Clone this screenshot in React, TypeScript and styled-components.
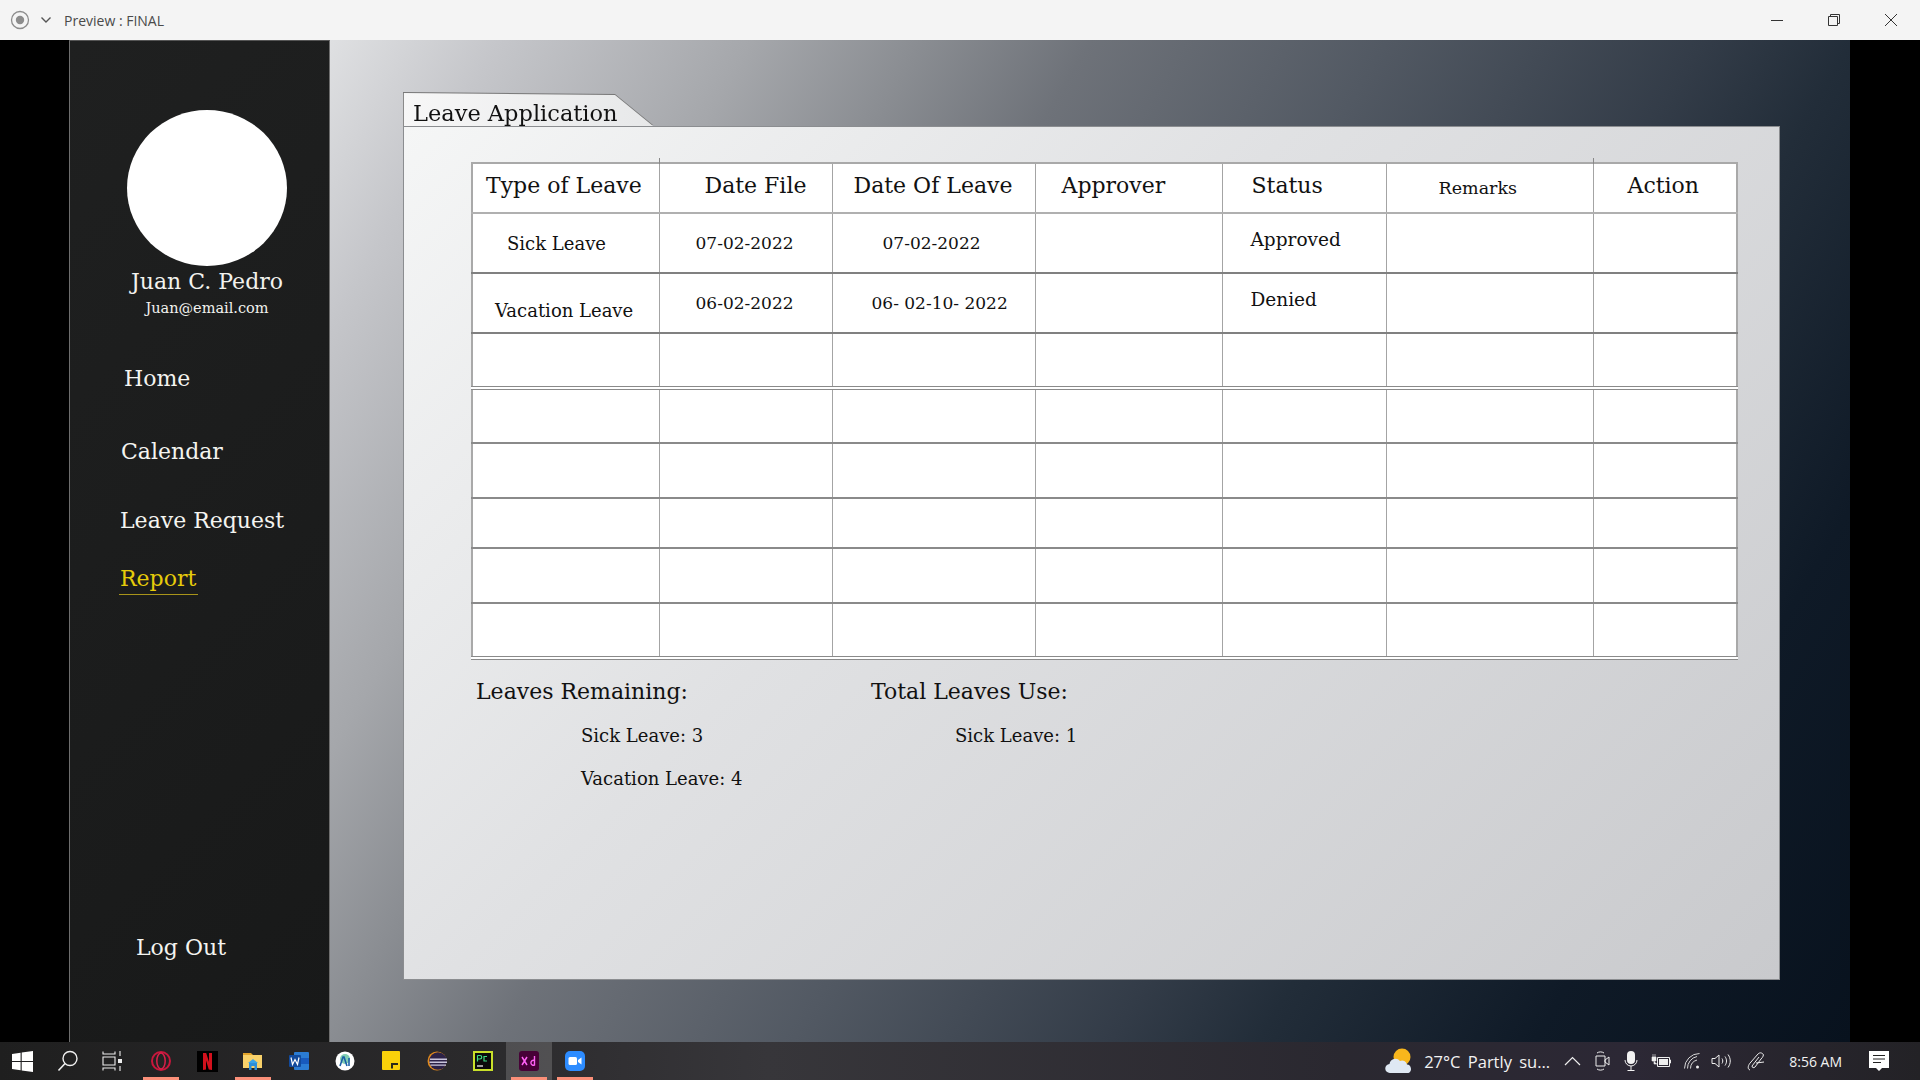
import React from "react";
import styled, { createGlobalStyle } from "styled-components";

const SLAB = `"DejaVu Serif", "Liberation Serif", serif`;
const UI = `"Open Sans", "Noto Sans", "Liberation Sans", sans-serif`;

const Global = createGlobalStyle`
  html, body { margin: 0; padding: 0; background: #000; }
  body { width: 1920px; height: 1080px; overflow: hidden; font-family: ${SLAB}; }
  * { box-sizing: border-box; }
`;

const Screen = styled.div`
  width: 1920px;
  height: 1080px;
  display: flex;
  flex-direction: column;
`;

const TitleBar = styled.header`
  height: 40px;
  flex: none;
  background: #f4f4f4;
  display: flex;
  align-items: center;
  padding-left: 10px;
  color: #444;
  font: 14px ${UI};
`;
const TitleIcon = styled.svg`
  width: 20px;
  height: 20px;
  flex: none;
`;
const Chevron = styled.svg`
  width: 12px;
  height: 8px;
  margin-left: 10px;
  flex: none;
`;
const TitleText = styled.span`
  margin-left: 12px;
  color: #4a4a4a;
`;
const WindowControls = styled.div`
  margin-left: auto;
  display: flex;
  padding-right: 1px;
`;
const WindowButton = styled.button`
  width: 57px;
  height: 40px;
  border: 0;
  padding: 0;
  background: none;
  display: flex;
  align-items: center;
  justify-content: center;
`;

const Main = styled.div`
  flex: 1;
  min-height: 0;
  display: flex;
  background: #000;
  padding: 0 70px 0 69px;
`;

const Sidebar = styled.aside`
  width: 261px;
  flex: none;
  background: linear-gradient(135deg, #1f2020 0%, #181919 100%);
  border-left: 1px solid #6e6e6e;
  border-right: 1px solid #6e6e6e;
  border-top: 1px solid #555;
  display: flex;
  flex-direction: column;
  padding: 69px 0 78px;
  color: #f2f2ee;
`;
const Profile = styled.div`
  width: 160px;
  margin-left: 57px;
  display: flex;
  flex-direction: column;
  align-items: center;
`;
const Avatar = styled.div`
  width: 160px;
  height: 156px;
  border-radius: 50%;
  background: #fff;
  flex: none;
`;
const UserName = styled.div`
  font-size: 22px;
  line-height: 30px;
  margin-top: 1px;
  white-space: nowrap;
`;
const UserMail = styled.div`
  font-size: 14.5px;
  line-height: 22px;
  white-space: nowrap;
`;
const Nav = styled.nav`
  margin-top: 45px;
  display: flex;
  flex-direction: column;
  align-items: flex-start;
  flex: 1;
`;
const NavItem = styled.a<{ $x: number; $gap?: number; $active?: boolean }>`
  font-size: 22px;
  line-height: 30px;
  height: 31px;
  white-space: nowrap;
  margin-left: ${(p) => p.$x}px;
  margin-top: ${(p) => p.$gap ?? 0}px;
  color: ${(p) => (p.$active ? "#e6cb0a" : "#f4f4f0")};
  border-bottom: ${(p) => (p.$active ? "1.5px solid #a8941a" : "0")};
  padding: 0 2px 0 1px;
`;
const LogOut = styled(NavItem)`
  margin-top: auto;
`;

const Content = styled.main`
  flex: 1;
  min-width: 0;
  background: linear-gradient(
    120.7deg,
    #dfe0e2 0%,
    #c5c6ca 8%,
    #a5a7ab 20%,
    #8a8d92 28%,
    #6e7279 36%,
    #525963 50%,
    #333c48 65%,
    #222d39 72%,
    #0f1a27 85%,
    #08121e 100%
  );
  padding: 53px 0 0 73px;
  display: flex;
  flex-direction: column;
  align-items: flex-start;
`;

const TabShadow = styled.div`
  filter: drop-shadow(0 -0.5px 0.5px #777);
  flex: none;
`;
const Tab = styled.div`
  width: 250px;
  height: 33px;
  clip-path: polygon(0 0, 212px 2px, 100% 100%, 0 100%);
  background: linear-gradient(100deg, #f7f7f7, #e7e8e9);
  border-left: 1px solid #8a8a8a;
  padding: 5px 0 0 9px;
  font-size: 22.5px;
  line-height: 30px;
  color: #111;
  white-space: nowrap;
`;

const Panel = styled.section`
  width: 1377px;
  height: 854px;
  flex: none;
  border: 1px solid #8b8d90;
  background: linear-gradient(135deg, #f5f6f6 0%, #e0e1e3 40%, #c9cacd 100%);
  padding: 35px 0 0 67px;
  color: #111;
`;

const Table = styled.table`
  border-collapse: collapse;
  table-layout: fixed;
  width: 1265px;
  background: #fff;
  border: 2px solid #a9a9a9;
`;
const Row = styled.tr<{ $h: number; $line?: string; $double?: boolean }>`
  height: ${(p) => p.$h}px;
  border-bottom: ${(p) => (p.$double ? "4px double #8a8a8a" : `2px solid ${p.$line ?? "#8a8a8a"}`)};
`;
const Cell = styled.td<{ $x?: number; $dy?: number; $size?: number; $tick?: boolean }>`
  position: relative;
  padding: ${(p) => Math.max(p.$dy ?? 0, 0)}px 0 ${(p) => Math.max(-(p.$dy ?? 0), 0)}px ${(p) => p.$x ?? 0}px;
  border-left: 1px solid #a4a4a4;
  border-right: 1px solid #a4a4a4;
  font-size: ${(p) => p.$size ?? 18}px;
  font-weight: 400;
  text-align: left;
  white-space: nowrap;
  color: #111;
  overflow: visible;
  &::before {
    content: ${(p) => (p.$tick ? '""' : "none")};
    position: absolute;
    left: -1px;
    top: -6px;
    height: 6px;
    width: 1px;
    background: #888;
  }
`;

const Summary = styled.div`
  display: flex;
  margin: 17px 0 0 5px;
`;
const SummaryColumn = styled.div<{ $w?: number; $indent: number }>`
  width: ${(p) => p.$w ?? 395}px;
  flex: none;
  --indent: ${(p) => p.$indent}px;
`;
const SummaryHead = styled.h3`
  margin: 0;
  font-size: 22px;
  font-weight: 400;
  line-height: 30px;
  white-space: nowrap;
`;
const SummaryLine = styled.div`
  margin: 14px 0 0 var(--indent);
  font-size: 18px;
  line-height: 29px;
  white-space: nowrap;
`;

const TaskBar = styled.footer`
  height: 38px;
  flex: none;
  display: flex;
  align-items: stretch;
  background: linear-gradient(90deg, #1f1f1f 0%, #2b2a2c 25%, #37363a 40%, #2a2830 70%, #2c2835 85%, #232226 100%);
  color: #f2f2f2;
  font: 16px ${UI};
`;
const Start = styled.div`
  display: flex;
`;
const SystemGroup = styled.div`
  display: flex;
  padding-right: 3px;
`;
const Slot = styled.div<{ $running?: boolean; $active?: boolean }>`
  position: relative;
  width: 46px;
  display: flex;
  align-items: center;
  justify-content: center;
  background: ${(p) => (p.$active ? "rgba(255,255,255,0.17)" : "transparent")};
  &::after {
    content: ${(p) => (p.$running ? '""' : "none")};
    position: absolute;
    left: 5px;
    right: 5px;
    bottom: 0;
    height: 3px;
    background: #fb9079;
  }
`;
const SystemSlot = styled(Slot)`
  width: 45px;
`;
const Tray = styled.div`
  margin-left: auto;
  display: flex;
  align-items: center;
  padding-right: 31px;
`;
const Weather = styled.span`
  margin-left: 10px;
  font-size: 16.5px;
  white-space: nowrap;
  word-spacing: 3px;
`;
const TrayIcon = styled.svg<{ $left: number }>`
  margin-left: ${(p) => p.$left}px;
  flex: none;
`;
const Clock = styled.span`
  margin-left: 23px;
  font-size: 14px;
  white-space: nowrap;
`;

const Ic: React.FC<{ w?: number; h?: number; children: React.ReactNode }> = ({ w = 24, h = 24, children }) => (
  <svg width={w} height={h} viewBox={`0 0 ${w} ${h}`}>{children}</svg>
);

const rows = [
  { h: 60, line: "#808080", cells: [
    { t: "Sick Leave", x: 34, s: 18 }, { t: "07-02-2022", x: 36, s: 17 }, { t: "", }, { t: "" }, { t: "Approved", x: 28, dy: -8, s: 18.5 }, { t: "" }, { t: "" } ] },
  { h: 60, line: "#808080", cells: [
    { t: "Vacation Leave", x: 22, dy: 14, s: 18 }, { t: "06-02-2022", x: 36, s: 17 }, { t: "" }, { t: "" }, { t: "Denied", x: 28, dy: -8, s: 18.5 }, { t: "" }, { t: "" } ] },
];
const secondDate = ["07-02-2022", "06- 02-10- 2022"];
const secondX = [50, 39];

const emptyHeights = [55, 55, 55, 50, 55, 55];

export default function App() {
  return (
    <Screen>
      <Global />
      <TitleBar>
        <TitleIcon viewBox="0 0 20 20">
          <circle cx="10" cy="10" r="8.5" fill="none" stroke="#8c8c8c" strokeWidth="1.3" />
          <circle cx="10" cy="10" r="4.2" fill="#8c8c8c" />
        </TitleIcon>
        <Chevron viewBox="0 0 12 8">
          <path d="M1.5 1.5 6 6l4.5-4.5" fill="none" stroke="#555" strokeWidth="1.4" />
        </Chevron>
        <TitleText>Preview : FINAL</TitleText>
        <WindowControls>
          <WindowButton aria-label="minimize">
            <Ic w={12} h={12}><path d="M0 6.5h12" stroke="#333" strokeWidth="1" /></Ic>
          </WindowButton>
          <WindowButton aria-label="restore">
            <Ic w={12} h={12}>
              <path d="M.5 2.5h9v9h-9z" fill="none" stroke="#333" />
              <path d="M2.5 2.5v-2h9v9h-2" fill="none" stroke="#333" />
            </Ic>
          </WindowButton>
          <WindowButton aria-label="close">
            <Ic w={12} h={12}><path d="M0 0l12 12M12 0 0 12" stroke="#333" strokeWidth="1" /></Ic>
          </WindowButton>
        </WindowControls>
      </TitleBar>

      <Main>
        <Sidebar>
          <Profile>
            <Avatar />
            <UserName>Juan C. Pedro</UserName>
            <UserMail>Juan@email.com</UserMail>
          </Profile>
          <Nav>
            <NavItem $x={53}>Home</NavItem>
            <NavItem $x={50} $gap={42}>Calendar</NavItem>
            <NavItem $x={49} $gap={38}>Leave Request</NavItem>
            <NavItem $x={49} $gap={27} $active>Report</NavItem>
            <LogOut $x={65}>Log Out</LogOut>
          </Nav>
        </Sidebar>

        <Content>
          <TabShadow>
            <Tab>Leave Application</Tab>
          </TabShadow>
          <Panel>
            <Table>
              <colgroup>
                {[187, 173, 203, 187, 164, 207, 144].map((w, i) => (
                  <col key={i} style={{ width: w }} />
                ))}
              </colgroup>
              <tbody>
                <Row $h={50} $line="#b0b0b0">
                  <Cell as="th" $x={13} $size={22} $dy={-5}>Type of Leave</Cell>
                  <Cell as="th" $x={45} $size={22} $dy={-5} $tick>Date File</Cell>
                  <Cell as="th" $x={21} $size={22} $dy={-5}>Date Of Leave</Cell>
                  <Cell as="th" $x={26} $size={22} $dy={-5}>Approver</Cell>
                  <Cell as="th" $x={29} $size={22} $dy={-5}>Status</Cell>
                  <Cell as="th" $x={52} $size={17.5} $dy={0}>Remarks</Cell>
                  <Cell as="th" $x={34} $size={22} $dy={-5} $tick>Action</Cell>
                </Row>
                {rows.map((r, ri) => (
                  <Row key={ri} $h={r.h} $line={r.line}>
                    {r.cells.map((c: any, ci) => (
                      <Cell key={ci} $x={ci === 2 ? secondX[ri] : c.x} $dy={c.dy} $size={ci === 2 ? 17 : c.s}>
                        {ci === 2 ? secondDate[ri] : c.t}
                      </Cell>
                    ))}
                  </Row>
                ))}
                {emptyHeights.map((h, i) => (
                  <Row key={i} $h={h} $double={i === 0 || i === 5}>
                    {Array.from({ length: 7 }).map((_, ci) => (
                      <Cell key={ci} />
                    ))}
                  </Row>
                ))}
              </tbody>
            </Table>
            <Summary>
              <SummaryColumn $indent={105}>
                <SummaryHead>Leaves Remaining:</SummaryHead>
                <SummaryLine>Sick Leave: 3</SummaryLine>
                <SummaryLine>Vacation Leave: 4</SummaryLine>
              </SummaryColumn>
              <SummaryColumn $indent={84}>
                <SummaryHead>Total Leaves Use:</SummaryHead>
                <SummaryLine>Sick Leave: 1</SummaryLine>
              </SummaryColumn>
            </Summary>
          </Panel>
        </Content>
      </Main>

      <TaskBar>
        <Start>
          <SystemGroup>
            <SystemSlot>
              <Ic w={21} h={21}>
                <path d="M0 3 8.6 1.8v8.1H0zM9.7 1.6 21 0v9.9H9.7zM0 11h8.6v8.2L0 18zM9.7 11H21v10l-11.3-1.6z" fill="#fff" />
              </Ic>
            </SystemSlot>
            <SystemSlot>
              <Ic w={22} h={22}>
                <circle cx="13" cy="8.5" r="7" fill="none" stroke="#f0f0f0" strokeWidth="1.4" />
                <path d="M8 13.5 1.5 20.5" stroke="#f0f0f0" strokeWidth="1.6" />
              </Ic>
            </SystemSlot>
            <SystemSlot>
              <Ic w={22} h={20}>
                <path d="M1 .5v2.500h12V.5M1 6h12v8H1zM1 19.500V17h12v2.500" fill="none" stroke="#eee" strokeWidth="1.1" />
                <path d="M18 0v5M18 15v5" stroke="#eee" strokeWidth="1.1" />
                <rect x="16" y="8" width="4" height="4" fill="#eee" />
              </Ic>
            </SystemSlot>
          </SystemGroup>
          <Slot $running>
            <Ic w={22} h={22}>
              <circle cx="11" cy="11" r="9" fill="none" stroke="#c8173c" strokeWidth="2" />
              <ellipse cx="11" cy="11" rx="4.2" ry="8" fill="none" stroke="#d9204a" strokeWidth="1.5" />
            </Ic>
          </Slot>
          <Slot>
            <Ic w={21} h={21}>
              <rect width="21" height="21" fill="#000" />
              <path d="M6 2h3.200l2.800 9V2h3v17l-3.200-.4L9 9.500V18.600L6 19z" fill="#d3101c" />
            </Ic>
          </Slot>
          <Slot $running>
            <Ic w={20} h={20}>
              <path d="M0 2h8l2 2h-10z" fill="#e2a32a" />
              <path d="M0 4h19v13H0z" fill="#f8d16a" />
              <path d="M6 19v-7h8v7h-2.500v-4h-3v4z" fill="#2e8fd8" />
              <path d="M5 12 10 8l5 4z" fill="#3aa4e8" />
            </Ic>
          </Slot>
          <Slot>
            <Ic w={20} h={20}>
              <rect x="5" y="1" width="15" height="18" rx="1" fill="#2b7cd3" />
              <rect x="5" y="7" width="15" height="6" fill="#185abd" />
              <rect x="0" y="4" width="12" height="12" rx="1" fill="#124a9c" />
              <path d="M2 6.500 3.500 13.500 6 8.500l2.500 5L10 6.500" fill="none" stroke="#fff" strokeWidth="1.2" />
            </Ic>
          </Slot>
          <Slot>
            <Ic w={20} h={20}>
              <circle cx="10" cy="10" r="9.500" fill="#fff" />
              <circle cx="10" cy="8" r="5" fill="#3cb38a" opacity=".65" />
              <path d="M5 15 8 6h1l3 9" fill="none" stroke="#1b5fa8" strokeWidth="1.600" />
              <path d="M14 7v8" stroke="#1b5fa8" strokeWidth="1.600" />
            </Ic>
          </Slot>
          <Slot>
            <Ic w={20} h={20}>
              <rect width="18" height="19" x="1" fill="#fad20a" rx="1" />
              <path d="M10 17.500h2V14h5v-2h-7z" fill="#2b2b1a" />
            </Ic>
          </Slot>
          <Slot>
            <Ic w={20} h={20}>
              <circle cx="10" cy="10" r="9.500" fill="#e08a1e" />
              <circle cx="11" cy="10" r="8.800" fill="#2c2247" />
              <path d="M3 7.500h17v1.500H3zM2.500 10.500h17.500v1.500H2.500zM3.500 13.500h15.500v1.300H3.500z" fill="#c9c5dc" />
            </Ic>
          </Slot>
          <Slot>
            <Ic w={20} h={20}>
              <rect width="20" height="20" fill="#c9e02a" />
              <rect x="2" y="2" width="16" height="16" fill="#0b0b0b" />
              <path d="M4 15h6" stroke="#fff" strokeWidth="1.200" />
              <path d="M4.500 4.500h2.500a1.500 1.500 0 0 1 0 3.500H4.500M4.500 4.500v6" fill="none" stroke="#3ddc84" strokeWidth="1.200" />
              <path d="M14 5.500h-3v4.500h3" fill="none" stroke="#3ddc84" strokeWidth="1.200" />
            </Ic>
          </Slot>
          <Slot $running $active>
            <Ic w={20} h={20}>
              <rect width="20" height="20" rx="3" fill="#470137" />
              <path d="M3 6 8 14M8 6 3 14" stroke="#ff61f6" strokeWidth="1.500" />
              <path d="M15.500 5v9.500M15.500 9.500a2.500 2.500 0 1 0 0 4.500" fill="none" stroke="#ff61f6" strokeWidth="1.400" />
            </Ic>
          </Slot>
          <Slot $running>
            <Ic w={20} h={20}>
              <rect width="20" height="20" rx="5" fill="#2d8cff" />
              <rect x="3.500" y="6" width="8.500" height="8" rx="1.500" fill="#fff" />
              <path d="M13 9l3.500-2.500v7L13 11z" fill="#fff" />
            </Ic>
          </Slot>
        </Start>

        <Tray>
          <Ic w={29} h={26}>
            <circle cx="17" cy="9" r="8.500" fill="#f8b61c" />
            <path d="M5 25a4.500 4.500 0 0 1-.5-9A6 6 0 0 1 15 13a5 5 0 0 1 7 3.500 4.500 4.500 0 0 1 1.500 8.500z" fill="#dfe8f3" />
          </Ic>
          <Weather>27°C Partly su...</Weather>
          <TrayIcon $left={14} width="17" height="10" viewBox="0 0 17 10">
            <path d="M1 9 8.500 1.500 16 9" fill="none" stroke="#eee" strokeWidth="1.200" />
          </TrayIcon>
          <TrayIcon $left={14} width="15" height="20" viewBox="0 0 15 20">
            <path d="M1 5h9v10H1zM10 9l4-3v8l-4-3z" fill="none" stroke="#eee" />
            <path d="M2 2c2-1.500 5-1.500 7 0M2 18c2 1.500 5 1.500 7 0" fill="none" stroke="#eee" />
          </TrayIcon>
          <TrayIcon $left={14} width="14" height="20" viewBox="0 0 14 20">
            <rect x="3" y="0" width="8" height="13" rx="4" fill="#f2f2f2" />
            <path d="M1 9a6 6 0 0 0 12 0M7 15v4M3.500 19.500h7" fill="none" stroke="#f2f2f2" />
          </TrayIcon>
          <TrayIcon $left={13} width="20" height="14" viewBox="0 0 20 14">
            <path d="M6.500 3.500h12v9h-12z" fill="none" stroke="#eee" />
            <rect x="8" y="5" width="9" height="6" fill="#eee" />
            <path d="M19 6h1v3h-1zM1 3h4v4H1zM3 7v3h3M2 0v3M4 0v3" fill="#eee" stroke="#eee" strokeWidth=".6" />
          </TrayIcon>
          <TrayIcon $left={13} width="16" height="16" viewBox="0 0 16 16">
            <g fill="none" stroke="#d8d8d8" strokeWidth="1">
              <path d="M.5 15.500A15 15 0 0 1 15.500 .5" />
              <path d="M3.500 15.500A12 12 0 0 1 13 3.500" />
              <path d="M6.500 15.500A9 9 0 0 1 13 7" />
            </g>
            <circle cx="13.500" cy="14" r="1.500" fill="#eee" />
          </TrayIcon>
          <TrayIcon $left={11} width="20" height="16" viewBox="0 0 20 16">
            <path d="M1 5.500h3l4-3.500v12l-4-3.500H1z" fill="none" stroke="#eee" />
            <path d="M11 5.500c1 1.500 1 3.500 0 5M14 3.500c2 3 2 6 0 9M17 1.500c3 4 3 9 0 13" fill="none" stroke="#eee" />
          </TrayIcon>
          <TrayIcon $left={15} width="20" height="20" viewBox="0 0 20 20">
            <path d="M4 19c-3-1-2-5 1-8l7-8c2-2 4-1 5 0s0 3-2 5l-6 8c-1 1-3 1-3-1l7-9M10 12l8-1" fill="none" stroke="#eee" />
          </TrayIcon>
          <Clock>8:56 AM</Clock>
          <TrayIcon $left={27} width="20" height="20" viewBox="0 0 20 20">
            <path d="M0 0h20v17h-7l-3 3-3-3H0z" fill="#fff" />
            <path d="M4 4.500h12M4 8h12M4 11.500h8" stroke="#222" strokeWidth="1" />
          </TrayIcon>
        </Tray>
      </TaskBar>
    </Screen>
  );
}
